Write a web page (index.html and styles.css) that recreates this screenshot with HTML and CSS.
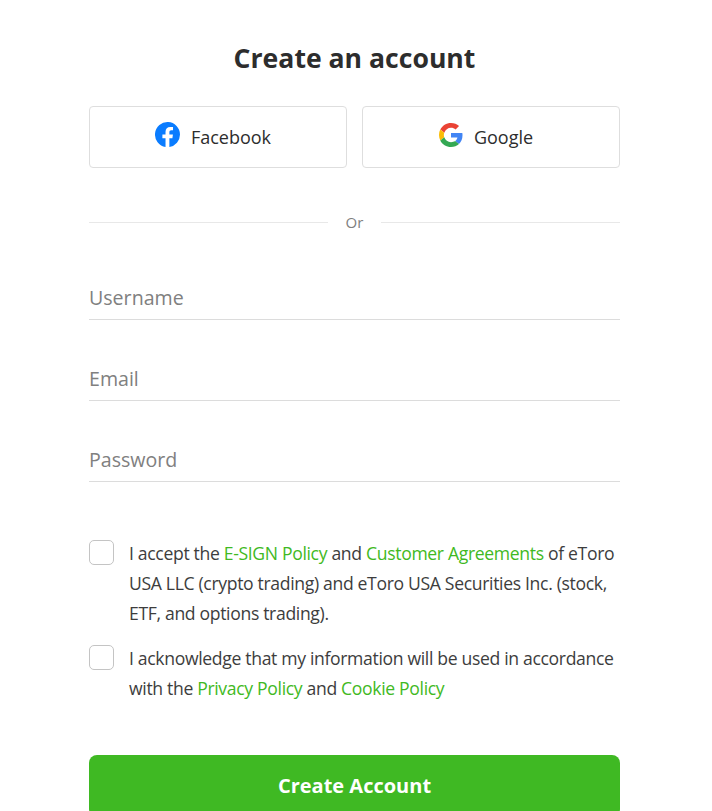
FILE: index.html
```html
<!DOCTYPE html>
<html lang="en">
<head>
    <meta charset="UTF-8">
    <meta name="viewport" content="width=device-width, initial-scale=1.0">
    <title>Create an account</title>
    <link rel="stylesheet" href="styles.css">
</head>
<body>
    <main class="signup">
        <h1 class="title">Create an account</h1>

        <div class="social">
            <a class="social-btn" href="#">
                <svg class="social-icon" viewBox="0 0 24 24" width="25" height="25">
                    <path fill="#0a7cff" d="M24 12a12 12 0 1 0-13.9 11.9v-8.4H7.1V12h3V9.4c0-3 1.8-4.7 4.5-4.7 1.300 0 2.700.2 2.700.2v3h-1.500c-1.500 0-2 .9-2 1.900V12h3.400l-.5 3.500h-2.900v8.400A12 12 0 0 0 24 12z"/>
                </svg>
                <span>Facebook</span>
            </a>
            <a class="social-btn" href="#">
                <svg class="social-icon" viewBox="0 0 48 48" width="24" height="24">
                    <path fill="#ea4335" d="M24 9.500c3.500 0 6.700 1.200 9.200 3.600l6.900-6.900C35.900 2.400 30.500 0 24 0 14.600 0 6.500 5.400 2.600 13.200l8 6.200C12.500 13.700 17.800 9.500 24 9.500z"/>
                    <path fill="#4285f4" d="M47 24.500c0-1.600-.1-3.100-.4-4.500H24v9h12.900c-.6 3-2.200 5.500-4.700 7.200l7.700 6c4.500-4.200 7.100-10.300 7.100-17.700z"/>
                    <path fill="#fbbc05" d="M10.500 28.600c-.5-1.400-.8-3-.8-4.600s.3-3.200.8-4.600l-8-6.200C.9 16.500 0 20.100 0 24s.9 7.500 2.600 10.800l7.900-6.200z"/>
                    <path fill="#34a853" d="M24 48c6.500 0 11.900-2.100 15.900-5.800l-7.700-6c-2.200 1.400-4.900 2.300-8.200 2.300-6.200 0-11.500-4.200-13.400-9.900l-8 6.200C6.500 42.600 14.600 48 24 48z"/>
                </svg>
                <span>Google</span>
            </a>
        </div>

        <div class="divider"><span>Or</span></div>

        <form class="fields">
            <input class="field" type="text" placeholder="Username">
            <input class="field" type="email" placeholder="Email">
            <input class="field" type="password" placeholder="Password">

            <label class="consent consent-first">
                <input class="check" type="checkbox">
                <span>I accept the <a href="#">E-SIGN Policy</a> and <a href="#">Customer Agreements</a> of eToro USA LLC (crypto trading) and eToro USA Securities Inc. (stock, ETF, and options trading).</span>
            </label>
            <label class="consent">
                <input class="check" type="checkbox">
                <span>I acknowledge that my information will be used in accordance with the <a href="#">Privacy Policy</a> and <a href="#">Cookie Policy</a></span>
            </label>

            <button class="submit" type="submit">Create Account</button>
        </form>
    </main>
</body>
</html>
```

FILE: styles.css
```css
html, body {
    height: 811px;
    overflow: hidden;
}
body {
    font-family: "Open Sans", sans-serif;
    margin: 0;
    padding: 0;
    background-color: #fff;
    color: #2d2d2d;
}
.signup {
    width: 531px;
    margin-left: 89px;
}
.title {
    margin: 0;
    padding-top: 39px;
    font-size: 26.6px;
    line-height: 38px;
    font-weight: 700;
    text-align: center;
}
.social {
    display: flex;
    gap: 15px;
    margin-top: 29px;
}
.social-btn {
    flex: 1;
    height: 62px;
    box-sizing: border-box;
    display: flex;
    align-items: center;
    justify-content: center;
    gap: 11px;
    padding-right: 10px;
    border: 1px solid #dedede;
    border-radius: 4px;
    color: #2d2d2d;
    font-size: 18px;
    font-weight: 500;
    text-decoration: none;
}
.social-icon {
    margin-top: -5px;
}
.divider {
    display: flex;
    align-items: center;
    gap: 18px;
    margin-top: 44px;
    height: 20px;
    color: #808080;
    font-size: 15px;
}
.divider::before, .divider::after {
    content: "";
    flex: 1;
    border-top: 1px solid #e8e8e8;
}
.fields {
    display: flex;
    flex-direction: column;
    margin-top: 29px;
}
.field {
    height: 59px;
    margin-bottom: 22px;
    padding: 14px 0 0;
    box-sizing: border-box;
    border: none;
    border-bottom: 1px solid #dcdcdc;
    outline: none;
    font-family: inherit;
    font-size: 19.6px;
    color: #2d2d2d;
}
.field::placeholder {
    color: #808080;
    opacity: 1;
}
.consent {
    display: flex;
    gap: 15px;
    font-size: 17.6px;
    line-height: 30px;
    letter-spacing: -0.34px;
    color: #3d3d3d;
    margin-bottom: 15px;
}
.consent-first {
    margin-top: 34px;
}
.consent a {
    color: #3fb923;
    text-decoration: none;
}
.check {
    appearance: none;
    flex: none;
    width: 25px;
    height: 25px;
    margin: 2px 0 0;
    border: 1px solid #c4c4c4;
    border-radius: 5px;
    background: #fff;
}
.submit {
    display: block;
    width: 100%;
    height: 62px;
    margin-top: 37px;
    border: none;
    border-radius: 8px;
    background-color: #3fb923;
    color: #fff;
    font-family: inherit;
    font-size: 20px;
    font-weight: 700;
    padding: 0 0 2px;
}
```
